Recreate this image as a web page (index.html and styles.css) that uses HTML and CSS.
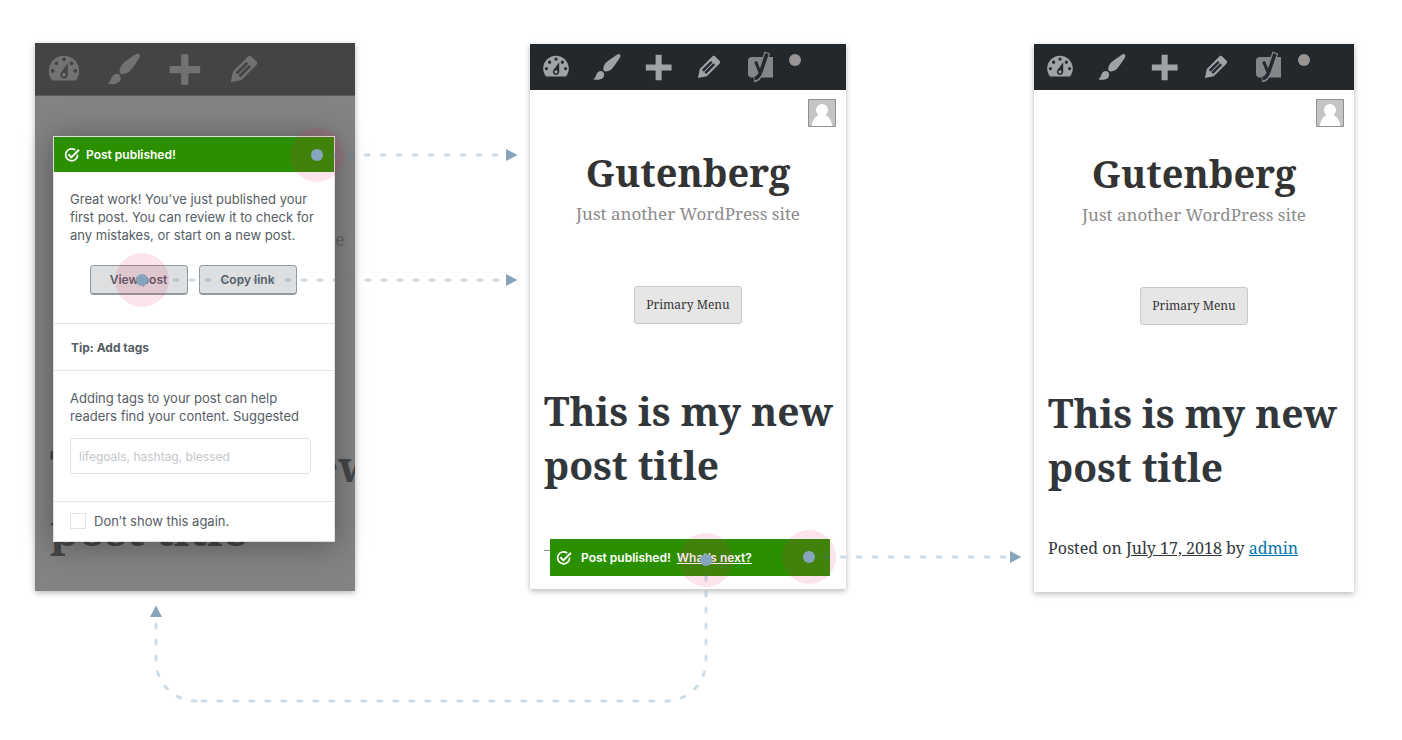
FILE: index.html
```html
<!DOCTYPE html>
<html lang="en">
<head>
<meta charset="utf-8">
<title>Post published flow</title>
<link rel="stylesheet" href="styles.css">
</head>
<body>
<svg class="sprite" aria-hidden="true">
  <symbol id="i-dashboard" viewBox="0 0 20 20"><path fill-rule="evenodd" d="M3.76 16h12.48c1.1-1.37 1.76-3.11 1.76-5 0-4.42-3.58-8-8-8s-8 3.58-8 8c0 1.89.66 3.63 1.76 5zM10 4c.55 0 1 .45 1 1s-.45 1-1 1-1-.45-1-1 .45-1 1-1zM6 6c.55 0 1 .45 1 1s-.45 1-1 1-1-.45-1-1 .45-1 1-1zm8 0c.55 0 1 .45 1 1s-.45 1-1 1-1-.45-1-1 .45-1 1-1zm-5.37 5.55L12 7v6c0 1.1-.9 2-2 2s-2-.9-2-2c0-.57.24-1.08.63-1.45zM4 10c.55 0 1 .45 1 1s-.45 1-1 1-1-.45-1-1 .45-1 1-1zm12 0c.55 0 1 .45 1 1s-.45 1-1 1-1-.45-1-1 .45-1 1-1zm-5 3c0-.55-.45-1-1-1s-1 .45-1 1 .45 1 1 1 1-.45 1-1z"/></symbol>
  <symbol id="i-brush" viewBox="0 0 20 20"><path d="M18.33 3.57s.27-.8-.31-1.36c-.53-.52-1.22-.24-1.22-.24-.61.3-5.76 3.47-7.67 5.57-.86.96-2.06 3.79-1.09 4.82.92.98 3.96-.17 4.79-1 2.06-2.06 5.21-7.17 5.5-7.79zM1.4 17.65c2.37-1.56 1.46-3.41 3.23-4.64.93-.65 2.22-.62 3.08.29.63.67.8 2.57-.16 3.46-1.57 1.45-4 1.55-6.15.89z"/></symbol>
  <symbol id="i-plus" viewBox="0 0 20 20"><path d="M8.5 2.3h3.800v6.1h6.200v3.800h-6.200v6.1H8.500v-6.1H2.400V8.400h6.100z"/></symbol>
  <symbol id="i-edit" viewBox="0 0 20 20"><path fill-rule="evenodd" d="M13.89 3.39l2.71 2.72c.46.46.42 1.24.03 1.64l-8.01 8.02-5.56 1.16 1.16-5.58s7.6-7.63 7.99-8.03c.39-.39 1.22-.39 1.68.07zm-2.73 2.79l-5.59 5.61 1.11 1.11 5.54-5.65zm-2.97 8.23l5.58-5.6-1.07-1.08-5.59 5.6z"/></symbol>
  <symbol id="i-yoast" viewBox="0 0 32 32">
    <path fill="#82878c" d="M8 6h21v20.500H8a4 4 0 0 1-4-4V10a4 4 0 0 1 4-4z"/>
    <path fill="none" stroke="#82878c" stroke-width="6" d="M23.300 1.500l-6 18q-2.500 8.500-7.500 8.800"/>
    <path fill="none" stroke="#23282d" stroke-width="3.600" d="M23 2.600l-5.900 17.400q-2.300 7-6.600 7.600"/>
    <path fill="none" stroke="#23282d" stroke-width="3" d="M11.600 10.500l4.200 10.500"/>
  </symbol>
  <symbol id="i-check" viewBox="0 0 16 16"><g fill="none" stroke="#fff" stroke-width="1.700"><path d="M11.200 3A6 6 0 1 0 13.600 7.600"/><path stroke-width="2" d="M4.400 7.200l3 3.200 7.600-7.600"/></g></symbol>
</svg>

<main class="board">
  <section class="screen screen-modal">
    <nav class="toolbar">
      <svg class="icon"><use href="#i-dashboard"/></svg>
      <svg class="icon"><use href="#i-brush"/></svg>
      <svg class="icon"><use href="#i-plus"/></svg>
      <svg class="icon"><use href="#i-edit"/></svg>
    </nav>
    <div class="backdrop">
      <p class="dim-tagline">site</p>
      <p class="dim-title">This is my new<br>post title</p>
    </div>
    <div class="modal" role="dialog" aria-labelledby="modal-title">
      <header class="modal-head">
        <svg class="check"><use href="#i-check"/></svg>
        <span id="modal-title">Post published!</span>
        <button class="close" type="button" aria-label="Close"><svg viewBox="0 0 10 10"><path d="M1 1l8 8M9 1L1 9" stroke="#fff" stroke-width="2"/></svg></button>
      </header>
      <div class="modal-intro">
        <p>Great work! You’ve just published your first post. You can review it to check for any mistakes, or start on a new post.</p>
        <div class="actions">
          <button class="btn" type="button">View post</button>
          <button class="btn" type="button">Copy link</button>
        </div>
      </div>
      <h2 class="tip">Tip: Add tags</h2>
      <div class="tags">
        <label for="tags">Adding tags to your post can help readers find your content. Suggested</label>
        <input id="tags" class="field" type="text" placeholder="lifegoals, hashtag, blessed">
      </div>
      <label class="again"><input type="checkbox"><span>Don’t show this again.</span></label>
    </div>
  </section>

  <section class="screen screen-notice">
    <nav class="toolbar">
      <svg class="icon"><use href="#i-dashboard"/></svg>
      <svg class="icon"><use href="#i-brush"/></svg>
      <svg class="icon"><use href="#i-plus"/></svg>
      <svg class="icon"><use href="#i-edit"/></svg>
      <svg class="icon"><use href="#i-yoast"/></svg>
      <span class="status"></span>
    </nav>
    <div class="page">
      <svg class="avatar" viewBox="0 0 28 28"><path fill="#c4c4c4" stroke="#8f9092" d="M.5.5h27v27H.5z"/><circle cx="14" cy="11" r="6" fill="#fff"/><path fill="#fff" d="M4 27c.5-7 4-10 7-11h6c3 1 6.500 4 7 11z"/></svg>
      <p class="site-title">Gutenberg</p>
      <p class="tagline">Just another WordPress site</p>
      <button class="menu" type="button">Primary Menu</button>
      <h1 class="post-title">This is my new post title</h1>
      <div class="notice-row">
        <div class="notice">
          <svg class="check"><use href="#i-check"/></svg>
          <span>Post published!</span>
          <a href="#next">What’s next?</a>
        </div>
      </div>
    </div>
  </section>

  <section class="screen screen-post">
    <nav class="toolbar">
      <svg class="icon"><use href="#i-dashboard"/></svg>
      <svg class="icon"><use href="#i-brush"/></svg>
      <svg class="icon"><use href="#i-plus"/></svg>
      <svg class="icon"><use href="#i-edit"/></svg>
      <svg class="icon"><use href="#i-yoast"/></svg>
      <span class="status"></span>
    </nav>
    <div class="page">
      <svg class="avatar" viewBox="0 0 28 28"><path fill="#c4c4c4" stroke="#8f9092" d="M.5.5h27v27H.5z"/><circle cx="14" cy="11" r="6" fill="#fff"/><path fill="#fff" d="M4 27c.5-7 4-10 7-11h6c3 1 6.500 4 7 11z"/></svg>
      <p class="site-title">Gutenberg</p>
      <p class="tagline">Just another WordPress site</p>
      <button class="menu" type="button">Primary Menu</button>
      <h1 class="post-title">This is my new post title</h1>
      <p class="meta">Posted on <a class="date" href="#date">July 17, 2018</a> by <a href="#admin">admin</a></p>
    </div>
  </section>

  <svg class="flow" viewBox="0 0 1402 740" aria-hidden="true">
    <g class="halo"><circle cx="317" cy="155" r="27"/><circle cx="142" cy="280" r="27"/><circle cx="706" cy="560" r="27"/><circle cx="809" cy="557" r="27"/></g>
    <g class="dash">
      <path d="M333 155H498"/>
      <path d="M174 280H499"/>
      <path d="M825 557H1006"/>
      <path d="M706 576V661A40 40 0 0 1 666 701H202"/>
      <path d="M156 624V661A40 40 0 0 0 196 701"/>
    </g>
    <g class="mark">
      <circle cx="317" cy="155" r="6"/><circle cx="142" cy="280" r="6"/><circle cx="706" cy="560" r="6"/><circle cx="809" cy="557" r="6"/>
      <path d="M506 149l11.500 6-11.500 6zM506 274l11.500 6-11.500 6zM1010 551l11.500 6-11.500 6zM150 617l6-11.500 6 11.500z"/>
    </g>
  </svg>
</main>
</body>
</html>
```
FILE: styles.css
```css
* { box-sizing: border-box; }

body {
  margin: 0;
  background: #fff;
  font-family: Inter, "Liberation Sans", sans-serif;
  font-size: 13px;
  line-height: 18px;
  color: #555d66;
}

p, h1, h2 { margin: 0; font-size: inherit; }
button, input { font: inherit; color: inherit; }
.sprite { position: absolute; width: 0; height: 0; }

.board {
  position: relative;
  display: flex;
  align-items: flex-start;
  min-height: 740px;
  padding: 43px 35px 0;
}

.screen {
  flex: none;
  width: 320px;
  background: #fff;
  box-shadow: 0 2px 6px rgba(0, 0, 0, .28);
}

/* Admin toolbar */
.toolbar {
  display: flex;
  align-items: center;
  gap: 20px;
  height: 46px;
  padding: 0 10px;
  background: #23282d;
}
.icon { flex: none; width: 32px; height: 32px; fill: #9ea3a8; }
.status {
  align-self: flex-start;
  width: 12px;
  height: 12px;
  margin: 10px 0 0 -6px;
  border-radius: 50%;
  background: #999595;
}

/* Modal screen */
.screen-modal {
  position: relative;
  background: #838383;
}
.screen-modal .toolbar {
  gap: 22px;
  height: 53px;
  border-bottom: 1px solid #5c5c5e;
  background: #444446;
}
.screen-modal .icon { width: 38px; height: 38px; fill: #717274; }
.backdrop {
  height: 495px;
  padding: 130px 10px 0 15px;
  overflow: hidden;
  font-family: "Noto Serif", "DejaVu Serif Condensed", "DejaVu Serif", serif;
  color: #444648;
}
.dim-tagline { font-size: 18px; line-height: 26px; text-align: right; color: #666; }
.dim-title {
  margin-top: 181px;
  font-size: 44px;
  font-weight: 700;
  line-height: 64px;
  white-space: nowrap;
}
.modal {
  position: absolute;
  top: 93px;
  left: 18px;
  right: 20px;
  border: 1px solid #dcdedf;
  background: #fff;
  box-shadow: 0 3px 30px rgba(0, 0, 0, .35);
}
.modal-head {
  display: flex;
  align-items: center;
  gap: 6px;
  height: 35px;
  padding: 0 12px 0 10px;
  background: #2b9000;
  color: #fff;
  font-size: 12px;
  font-weight: 600;
}
.check { flex: none; width: 16px; height: 16px; }
.close {
  display: flex;
  margin-left: auto;
  padding: 0;
  border: 0;
  background: none;
}
.close svg { width: 10px; height: 10px; }
.modal-intro { padding: 18px 16px 28px; }
.actions {
  display: flex;
  justify-content: center;
  gap: 11px;
  margin: 21px 2px 0 0;
}
.btn {
  width: 98px;
  height: 30px;
  padding: 0;
  border: 1px solid #8f9a9f;
  border-bottom-width: 2px;
  border-radius: 4px;
  background: #dedfe0;
  font-size: 12px;
  font-weight: 600;
}
.tip {
  padding: 15px 17px 13px;
  border: solid #dfe4e8;
  border-width: 1px 0;
  font-size: 12px;
  font-weight: 700;
}
.tags { padding: 18px 23px 27px 16px; }
.tags label { display: block; }
.field {
  width: 100%;
  height: 36px;
  margin-top: 13px;
  padding: 0 8px;
  border: 1px solid #dfe4e8;
  border-radius: 3px;
  background: #fff;
  font-size: 12px;
}
.field::placeholder { color: #c2c7cc; opacity: 1; }
.again {
  display: flex;
  align-items: center;
  gap: 8px;
  height: 40px;
  padding: 0 16px 2px;
  border-top: 1px solid #e2e4e7;
}
.again input {
  appearance: none;
  width: 16px;
  height: 16px;
  margin: 0;
  border: 1px solid #dfe4e8;
  background: #fff;
}

/* Site screens */
.screen-notice { width: 316px; margin: 1px 0 0 175px; }
.screen-post { margin: 1px 0 0 188px; }
.screen-notice .toolbar { gap: 19px; }

.page {
  display: flex;
  flex-direction: column;
  align-items: center;
  padding: 9px 14px 13px;
  font-family: "Noto Serif", "DejaVu Serif Condensed", "DejaVu Serif", serif;
  color: #32373c;
}
.avatar { align-self: flex-end; width: 28px; height: 28px; margin-right: -4px; }
.site-title {
  margin-top: 18px;
  font-size: 38px;
  font-weight: 700;
  line-height: 54px;
  color: #333;
}
.tagline { margin-top: 1px; font-size: 17px; line-height: 28px; color: #8c8c8c; }
.menu {
  height: 38px;
  margin-top: 58px;
  padding: 0 11px;
  border: 1px solid #c8c8c8;
  border-radius: 3px;
  background: #e6e6e6;
  font-size: 12px;
  color: #333;
}
.post-title {
  align-self: stretch;
  margin: 60px -8px 0 0;
  font-size: 39px;
  font-weight: 700;
  line-height: 54px;
}
.notice-row {
  align-self: stretch;
  margin: 47px 2px 0 0;
  padding-left: 6px;
  background: linear-gradient(#8c8c8c, #8c8c8c) 0 11px / 6px 1px no-repeat;
}
.notice {
  display: flex;
  align-items: center;
  gap: 6px;
  height: 37px;
  padding: 0 6px;
  background: #2b9000;
  color: #fff;
  font-family: Inter, "Liberation Sans", sans-serif;
  font-size: 12px;
  font-weight: 600;
}
.notice .check { margin-right: 3px; }
.notice a { color: inherit; }
.screen-post .site-title { margin-top: 19px; }
.screen-post .post-title { margin-top: 61px; }
.meta {
  align-self: stretch;
  margin-top: 41px;
  padding-bottom: 18px;
  font-size: 16px;
  line-height: 26px;
}
.meta a { color: #0073aa; }
.meta .date { color: inherit; }

/* Flow connectors */
.flow {
  position: absolute;
  top: 0;
  left: 0;
  width: 1402px;
  height: 740px;
  pointer-events: none;
}
.halo { fill: rgba(233, 30, 99, .12); }
.dash {
  fill: none;
  stroke: rgba(66, 129, 170, .27);
  stroke-width: 3;
  stroke-linecap: round;
  stroke-dasharray: 4 12;
}
.mark { fill: #86a5bd; }
```
